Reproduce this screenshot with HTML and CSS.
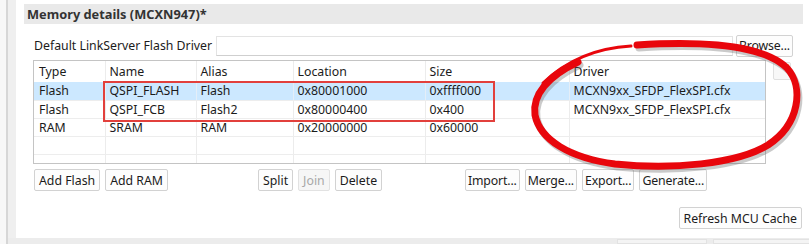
FILE: index.html
```html
<!DOCTYPE html>
<html lang="en">
<head>
    <meta charset="UTF-8">
    <title>Memory details</title>
    <link rel="stylesheet" href="styles.css">
</head>
<body>
<div class="outer">
    <div class="panel">
        <div class="section-title">Memory details (MCXN947)*</div>

        <div class="driver-row">
            <span class="label">Default LinkServer Flash Driver</span>
            <div class="field"></div>
            <button class="btn dots">Browse...</button>
        </div>

        <div class="table-row">
            <div class="table-box">
                <table class="mem">
                    <colgroup>
                        <col style="width:71px">
                        <col style="width:91px">
                        <col style="width:97px">
                        <col style="width:132px">
                        <col style="width:144px">
                        <col>
                    </colgroup>
                    <thead>
                    <tr><th>Type</th><th>Name</th><th>Alias</th><th>Location</th><th>Size</th><th>Driver</th></tr>
                    </thead>
                    <tbody>
                    <tr class="sel"><td>Flash</td><td>QSPI_FLASH</td><td>Flash</td><td>0x80001000</td><td>0xffff000</td><td>MCXN9xx_SFDP_FlexSPI.cfx</td></tr>
                    <tr><td>Flash</td><td>QSPI_FCB</td><td>Flash2</td><td>0x80000400</td><td>0x400</td><td>MCXN9xx_SFDP_FlexSPI.cfx</td></tr>
                    <tr><td>RAM</td><td>SRAM</td><td>RAM</td><td>0x20000000</td><td>0x60000</td><td></td></tr>
                    <tr><td></td><td></td><td></td><td></td><td></td><td></td></tr>
                    <tr class="last"><td></td><td></td><td></td><td></td><td></td><td></td></tr>
                    </tbody>
                </table>
            </div>
            <div class="side-btn"><span class="spark"></span></div>
        </div>

        <div class="btn-row">
            <div class="group g-add">
                <button class="btn">Add Flash</button>
                <button class="btn">Add RAM</button>
            </div>
            <div class="group g-edit">
                <button class="btn">Split</button>
                <button class="btn off">Join</button>
                <button class="btn">Delete</button>
            </div>
            <div class="group g-file">
                <button class="btn dots">Import...</button>
                <button class="btn dots">Merge...</button>
                <button class="btn dots">Export...</button>
                <button class="btn dots">Generate...</button>
            </div>
        </div>

        <div class="refresh-row">
            <button class="btn">Refresh MCU Cache</button>
        </div>
    </div>
    <div class="statusbar">
        <span class="tab t1"></span><span class="tab t2"></span>
    </div>
</div>

<!-- annotation marks drawn over the screenshot -->
<div class="mark-box"></div>
<svg class="mark-ring" width="809" height="244" viewBox="0 0 809 244">
    <g transform="translate(2,3)" opacity="0.35">
        <path d="M637 45 C700 41 762 44 787 68 C804 87 800 124 768 145 C737 164 672 170 615 164 C570 158 540 140 535 115 C532 95 548 76 578 62"
              fill="none" stroke="#666" stroke-width="7" stroke-linecap="round"/>
    </g>
    <path d="M637 45 C700 41 762 44 787 68 C804 87 800 124 768 145 C737 164 672 170 615 164 C570 158 540 140 535 115 C532 95 548 76 578 62"
          fill="none" stroke="#e8060c" stroke-width="7" stroke-linecap="round"/>
    <path d="M543 83 C565 62 595 48 631 46"
          fill="none" stroke="#e8060c" stroke-width="3" stroke-linecap="round"/>
</svg>
</body>
</html>
```

FILE: styles.css
```css
* {
    padding: 0;
    margin: 0;
    box-sizing: border-box;
}

body {
    width: 809px;
    height: 244px;
    overflow: hidden;
    background: #f7f7f7;
    font-family: "Noto Sans", "Noto Sans CJK SC", sans-serif;
    font-size: 12.3px;
    color: #1b1b1b;
    position: relative;
}

.outer {
    margin-left: 6px;
    border-left: 2px solid #d6d6d6;
    background: #efefef;
    height: 244px;
    display: flex;
    flex-direction: column;
}

.panel {
    margin-left: 8px;
    height: 238px;
    background: #fff;
    display: flex;
    flex-direction: column;
}

.statusbar {
    flex: 1;
    background: #ececec;
    position: relative;
}

.section-title {
    margin: 4px 6px 0 8px;
    height: 20px;
    line-height: 20px;
    background: #e9e9e9;
    padding-left: 3px;
    font-weight: bold;
    color: #333;
    font-size: 12.8px;
}

.driver-row {
    display: flex;
    align-items: center;
    margin: 10px 16px 0 18px;
    height: 23px;
}

.label {
    flex: none;
    width: 182px;
    white-space: nowrap;
}

.field {
    flex: 1;
    height: 20px;
    border: 1px solid #e3e3e3;
    border-bottom-color: #cfcfcf;
    margin-right: 3px;
}

.btn {
    font: inherit;
    color: #1b1b1b;
    background: #fdfdfd;
    border: 1px solid #d2d2d2;
    border-radius: 2px;
    height: 22px;
    padding: 0 4px;
    white-space: nowrap;
}

.btn.dots {
    padding: 0 2px;
    letter-spacing: -0.15px;
}

.btn.off {
    color: #a8a8a8;
    border-color: #e2e2e2;
    background: #f6f6f6;
}

.table-row {
    display: flex;
    margin: 3px 0 0 17px;
}

.table-box {
    width: 733px;
    height: 104px;
    border: 1px solid #c4c4c4;
    overflow: hidden;
}

.mem {
    border-collapse: collapse;
    table-layout: fixed;
    width: 100%;
}

.mem th {
    font-weight: normal;
    text-align: left;
    height: 21px;
    padding: 0 4px;
    border-left: 1px solid #ececec;
}

.mem td {
    height: 18px;
    padding: 0 4px;
    border-left: 1px solid #ececec;
    border-bottom: 1px solid #ededed;
    white-space: nowrap;
}

.mem th:first-child,
.mem td:first-child {
    border-left: 0;
    padding-left: 5px;
}

.mem tr.sel td {
    background: #cce8ff;
    border-left-color: #cce8ff;
}

.mem tr.sel td + td {
    border-left-color: #e4eef8;
}

.side-btn {
    width: 18px;
    height: 18px;
    margin: 2px 0 0 7px;
    border: 1px solid #e0e0e0;
    border-radius: 2px;
    background: #f8f8f8;
    position: relative;
}

.spark {
    position: absolute;
    right: 1px;
    top: 1px;
    width: 5px;
    height: 5px;
    background: #e8c060;
    border-radius: 1px;
}

.btn-row {
    display: grid;
    grid-template-columns: 224px 207px auto;
    margin: 5px 0 0 18px;
}

.group {
    display: flex;
    gap: 5px;
}

.refresh-row {
    display: flex;
    justify-content: flex-end;
    margin: 16px 7px 0 0;
}

.tab {
    position: absolute;
    top: 1px;
    height: 5px;
    background: #f4f4f4;
    border: 1px solid #e2e2e2;
}

.t1 {
    left: 609px;
    width: 90px;
}

.t2 {
    left: 705px;
    width: 100px;
}

.mark-box {
    position: absolute;
    left: 103px;
    top: 81px;
    width: 392px;
    height: 41px;
    border: 2px solid #e2403c;
}

.mark-ring {
    position: absolute;
    left: 0;
    top: 0;
}
```
